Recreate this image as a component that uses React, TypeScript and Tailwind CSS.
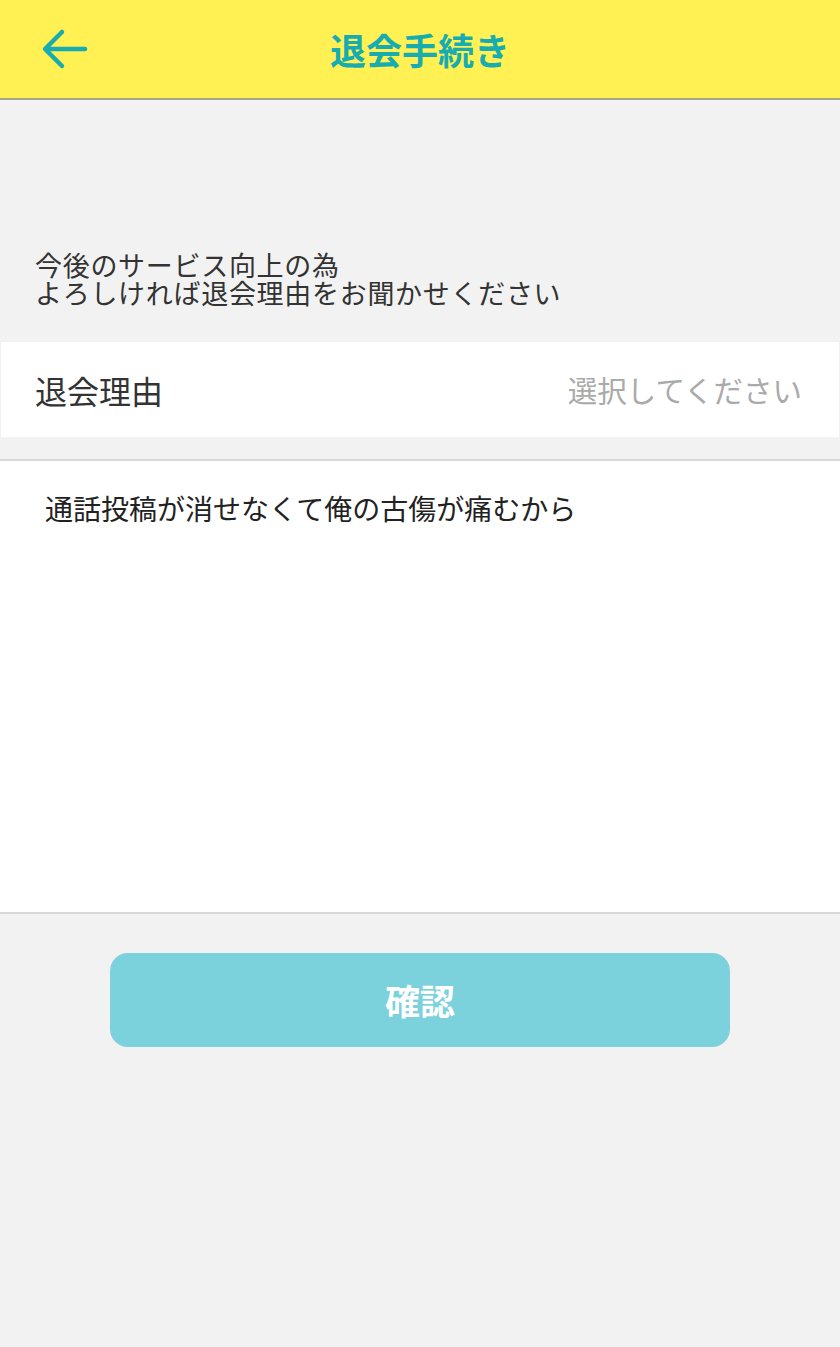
import { useState } from "react";

const jp = { fontFamily: '"Noto Sans CJK JP", "Noto Sans", sans-serif' };

export default function App() {
  const [reason] = useState("通話投稿が消せなくて俺の古傷が痛むから");

  return (
    <div className="min-h-[1347px] w-[840px] bg-[#f2f2f2]" style={jp}>
      <header className="relative flex h-[100px] items-center justify-center border-b-2 border-[#a8a68a] bg-[#fff153]">
        <button className="absolute left-[41px] top-[28px] p-0">
          <svg width="47" height="42" viewBox="0 0 47 42" fill="none">
            <path
              d="M44 21H6M21 4L4 21L21 38"
              stroke="#17adb0"
              strokeWidth="4.5"
              strokeLinecap="round"
              strokeLinejoin="round"
            />
          </svg>
        </button>
        <h1 className="text-[36px] font-bold leading-none text-[#17adb0]">退会手続き</h1>
      </header>

      <p className="mt-[151px] pl-[35px] text-[27px] leading-[28px] tracking-[0.7px] text-[#333]">
        今後のサービス向上の為
        <br />
        よろしければ退会理由をお聞かせください
      </p>

      <div className="mx-px mt-[35px] flex h-[95px] items-center justify-between bg-white pl-[34px] pr-[37px]">
        <span className="text-[32px] leading-none text-[#333]">退会理由</span>
        <span className="text-[29.5px] leading-none text-[#aaaaaa]">選択してください</span>
      </div>

      <div className="mt-[22px] h-[455px] border-y-2 border-[#d9d9d9] bg-white pl-[45px] pt-[33px]">
        <p className="text-[28px] leading-[28px] text-[#222]">{reason}</p>
      </div>

      <div className="flex justify-center pt-[39px]">
        <button className="flex h-[94px] w-[620px] items-center justify-center rounded-[18px] bg-[#7bd1dc] text-[35px] font-bold text-white">
          確認
        </button>
      </div>
    </div>
  );
}
